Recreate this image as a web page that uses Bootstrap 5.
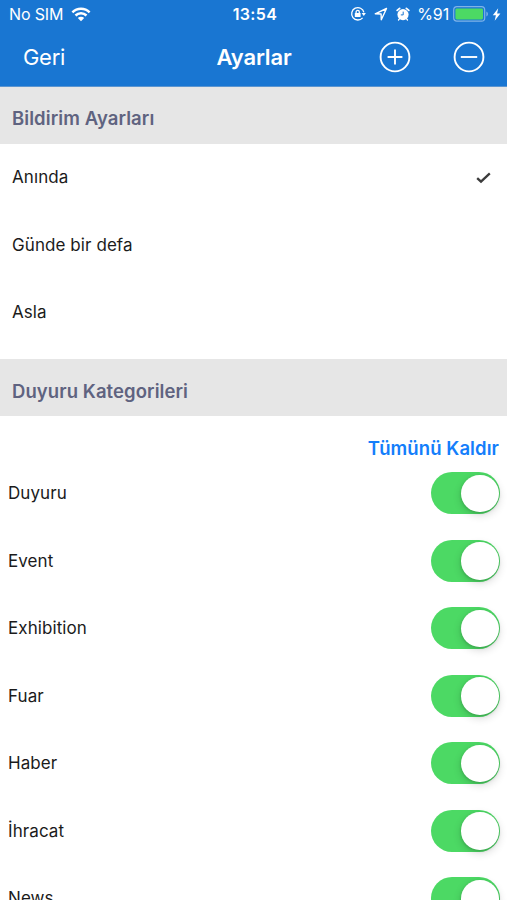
<!DOCTYPE html>
<html lang="tr">
<head>
<meta charset="utf-8">
<meta name="viewport" content="width=device-width, initial-scale=1">
<title>Ayarlar</title>
<link href="https://cdn.jsdelivr.net/npm/bootstrap@5.3.0/dist/css/bootstrap.min.css" rel="stylesheet">
<style>
  html, body { height: 100%; overflow: hidden; }
  body { font-family: Inter, "Liberation Sans", sans-serif; font-size: 17px; letter-spacing: .08px; color: #1b1b1b; background: #fff; }
  .app-top { background: #1976d2; height: 87px; border-bottom: 1px solid #5b95d0; }
  .status-line { height: 28px; font-size: 16px; letter-spacing: -.15px; padding: 0 6px 0 9px; }
  .status-line .clock { font-weight: 600; letter-spacing: .4px; }
  .pct { margin-left: 7px; }
  .battery { margin-left: 4px; margin-right: 3px; }
  .title-line { height: 58px; font-size: 22px; padding: 0 22px 0 23px; }
  .title-line a { letter-spacing: -.3px; }
  .title-line h1 { font-size: 22px; font-weight: 600; letter-spacing: -.15px; }
  .add { margin-right: 42px; }
  .cell-side { flex: 1 1 0; }
  .section-head { background: #e6e6e6; color: #5f6380; font-size: 18.5px; font-weight: 600; height: 56.5px; padding: 6px 12px 0; letter-spacing: .08px; }
  .section-head.second { padding-top: 8px; }
  .choice { height: 67.5px; padding: 1px 16px 0 12px; }
  .choices { height: 215.5px; }
  .clear-line { height: 44.5px; padding: 19px 8px 0 0; line-height: 26px; }
  .clear-line a { color: #147efb; font-size: 18.5px; font-weight: 600; }
  .category { height: 67.5px; padding: 0 7px 0 8px; }
  .category .form-switch { min-height: 0; margin-top: -1px; }
  .form-switch .form-check-input.ios {
    width: 69px; height: 42px; border: 0; border-radius: 21px; box-shadow: none;
    background: #4cd964; position: relative;
  }
  .ios::after { content: ""; position: absolute; right: 1.5px; top: 2.5px; width: 37.5px; height: 37.5px; border-radius: 50%; background: #fff; box-shadow: 0 3px 9px rgba(0,0,0,.16), 0 1px 3px rgba(0,0,0,.16); }
</style>
</head>
<body>
<header class="app-top text-white">
  <div class="status-line d-flex align-items-center">
    <div class="cell-side d-flex align-items-center">
      <span class="sim">No SIM</span>
      <svg class="ms-2" width="20" height="15" viewBox="0 0 20 15" fill="none" stroke="#fff" stroke-width="2.5"><path d="M1.4 5.3a12.2 12.2 0 0 1 17.2 0M4.5 8.5a7.8 7.8 0 0 1 11 0"/><path d="M10 14.2 6.8 11a4.5 4.5 0 0 1 6.4 0z" fill="#fff" stroke="none"/></svg>
    </div>
    <span class="clock">13:54</span>
    <div class="cell-side d-flex align-items-center justify-content-end">
      <svg width="16" height="16" viewBox="0 0 16 16" fill="none" stroke="#fff" stroke-width="1.3"><path d="M12.6 11.8A6.2 6.2 0 1 1 13.9 6.4"/><path d="M11.6 7.1h4.3L13.8 10z" fill="#fff" stroke="none"/><rect x="4.8" y="6.9" width="5.8" height="4.2" rx=".5" fill="#fff" stroke="none"/><path d="M6.1 7.2V6a1.6 1.6 0 0 1 3.2 0v1.2"/></svg>
      <svg class="mx-2" width="14" height="14" viewBox="0 0 14 14" fill="none" stroke="#fff" stroke-width="1.4" stroke-linejoin="round"><path d="M12.5 1.5 1.2 6.8l5.9.2.2 5.8z"/></svg>
      <svg width="14" height="14" viewBox="0 0 14 14"><circle cx="7" cy="7.6" r="5.6" fill="#fff"/><path d="M1.2 3.4 3.6 1.4M12.8 3.4 10.4 1.4" stroke="#fff" stroke-width="1.8" stroke-linecap="round"/><path d="M3.6 11.6 2.5 13M10.4 11.6l1.1 1.4" stroke="#fff" stroke-width="1.3" stroke-linecap="round"/><path d="M7.2 4.6v3.3H4.8" fill="none" stroke="#1976d2" stroke-width="1"/></svg>
      <span class="pct">%91</span>
      <svg class="battery" width="36" height="16" viewBox="0 0 36 16"><rect x=".7" y=".7" width="31" height="14.4" rx="3.2" fill="none" stroke="#7fb3e8" stroke-width="1.2"/><rect x="2.4" y="2.4" width="27.6" height="11" rx="1.4" fill="#4cd964"/><path d="M33.4 5.4c2 .8 2 4.2 0 5z" fill="#7fb3e8"/></svg>
      <svg width="9" height="13" viewBox="0 0 9 13"><path d="M6.2.3.8 7.2h3.1L2.7 12.7 8.4 5.4H5.1z" fill="#fff"/></svg>
    </div>
  </div>
  <nav class="title-line d-flex align-items-center">
    <div class="cell-side"><a class="text-white text-decoration-none" href="#">Geri</a></div>
    <h1 class="m-0">Ayarlar</h1>
    <div class="cell-side d-flex justify-content-end">
      <button class="btn p-0 border-0 lh-1 add" aria-label="Ekle"><svg class="d-block" width="32" height="32" viewBox="0 0 32 32" fill="none" stroke="#fff" stroke-width="1.9"><circle cx="16" cy="16" r="14.4"/><path d="M16 8.6v14.8M8.6 16h14.8"/></svg></button>
      <button class="btn p-0 border-0 lh-1" aria-label="Çıkar"><svg class="d-block" width="32" height="32" viewBox="0 0 32 32" fill="none" stroke="#fff" stroke-width="1.9"><circle cx="16" cy="16" r="14.4"/><path d="M7.8 16h16.4"/></svg></button>
    </div>
  </nav>
</header>
<main>
  <h2 class="section-head d-flex align-items-center m-0">Bildirim Ayarları</h2>
  <div class="choices">
    <div class="choice d-flex align-items-center justify-content-between"><span>Anında</span>
      <svg width="15" height="12" viewBox="0 0 15 12" fill="none" stroke="#3c3c3c" stroke-width="2.3"><path d="M1.2 6.1 5 9.7 13.8 1.3"/></svg></div>
    <div class="choice d-flex align-items-center"><span>Günde bir defa</span></div>
    <div class="choice d-flex align-items-center"><span>Asla</span></div>
  </div>
  <h2 class="section-head second d-flex align-items-center m-0">Duyuru Kategorileri</h2>
  <div class="clear-line text-end"><a class="text-decoration-none" href="#">Tümünü Kaldır</a></div>
  <div class="category d-flex align-items-center justify-content-between"><label for="c1">Duyuru</label><div class="form-switch p-0 d-flex"><input class="form-check-input ios m-0" type="checkbox" id="c1" checked></div></div>
  <div class="category d-flex align-items-center justify-content-between"><label for="c2">Event</label><div class="form-switch p-0 d-flex"><input class="form-check-input ios m-0" type="checkbox" id="c2" checked></div></div>
  <div class="category d-flex align-items-center justify-content-between"><label for="c3">Exhibition</label><div class="form-switch p-0 d-flex"><input class="form-check-input ios m-0" type="checkbox" id="c3" checked></div></div>
  <div class="category d-flex align-items-center justify-content-between"><label for="c4">Fuar</label><div class="form-switch p-0 d-flex"><input class="form-check-input ios m-0" type="checkbox" id="c4" checked></div></div>
  <div class="category d-flex align-items-center justify-content-between"><label for="c5">Haber</label><div class="form-switch p-0 d-flex"><input class="form-check-input ios m-0" type="checkbox" id="c5" checked></div></div>
  <div class="category d-flex align-items-center justify-content-between"><label for="c6">İhracat</label><div class="form-switch p-0 d-flex"><input class="form-check-input ios m-0" type="checkbox" id="c6" checked></div></div>
  <div class="category d-flex align-items-center justify-content-between"><label for="c7">News</label><div class="form-switch p-0 d-flex"><input class="form-check-input ios m-0" type="checkbox" id="c7" checked></div></div>
</main>
<script src="https://cdn.jsdelivr.net/npm/bootstrap@5.3.0/dist/js/bootstrap.bundle.min.js"></script>
</body>
</html>
